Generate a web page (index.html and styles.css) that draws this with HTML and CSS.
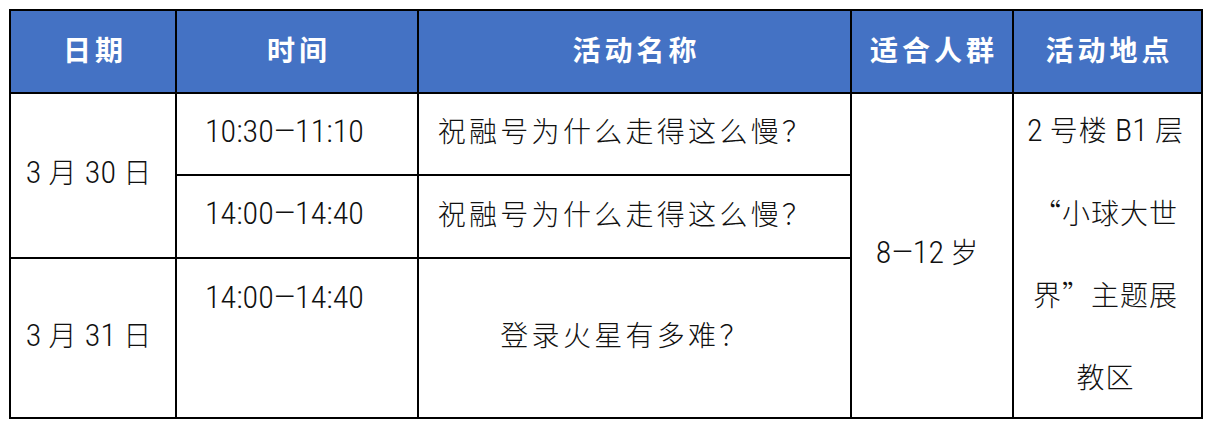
FILE: index.html
```html
<!DOCTYPE html>
<html lang="zh-CN">
<head>
<meta charset="utf-8">
<title>活动安排</title>
<link rel="stylesheet" href="styles.css">
</head>
<body>
<div class="page">
  <table class="schedule">
    <colgroup>
      <col class="c-date">
      <col class="c-time">
      <col class="c-name">
      <col class="c-age">
      <col class="c-place">
    </colgroup>
    <thead>
      <tr class="r-head">
        <th>日期</th>
        <th>时间</th>
        <th>活动名称</th>
        <th>适合人群</th>
        <th>活动地点</th>
      </tr>
    </thead>
    <tbody>
      <tr class="r-1">
        <td class="date" rowspan="2"><span class="n">3</span> 月 <span class="n">30</span> 日</td>
        <td class="time"><span class="n">10:30—11:10</span></td>
        <td class="name">祝融号为什么走得这么慢？</td>
        <td class="age" rowspan="3"><span class="n">8—12</span> 岁</td>
        <td class="place" rowspan="3"><div class="place-text"><span class="n">2</span> 号楼 <span class="n">B1</span> 层<br>“小球大世<br>界”主题展<br>教区</div></td>
      </tr>
      <tr class="r-2">
        <td class="time"><span class="n">14:00—14:40</span></td>
        <td class="name">祝融号为什么走得这么慢？</td>
      </tr>
      <tr class="r-3">
        <td class="date"><span class="n">3</span> 月 <span class="n">31</span> 日</td>
        <td class="time top"><span class="n">14:00—14:40</span></td>
        <td class="name">登录火星有多难？</td>
      </tr>
    </tbody>
  </table>
</div>
</body>
</html>
```

FILE: styles.css
```css
html, body {
  margin: 0;
  padding: 0;
  background: #ffffff;
}

.page {
  padding: 9px 0 0 9px;
}

.schedule {
  border-collapse: separate;
  border-spacing: 0;
  table-layout: fixed;
  width: 1194px;
  border-top: 2px solid #000;
  border-left: 2px solid #000;
  font-family: "Noto Sans CJK SC", sans-serif;
  color: #111;
}

.c-date { width: 166px; }
.c-time { width: 242px; }
.c-name { width: 433px; }
.c-age { width: 162px; }
.c-place { width: 189px; }

.schedule th,
.schedule td {
  box-sizing: border-box;
  border-right: 2px solid #000;
  border-bottom: 2px solid #000;
  padding: 0 0 8px 0;
  vertical-align: middle;
  text-align: center;
  font-size: 28px;
  font-weight: 300;
  line-height: 40px;
}

.r-head { height: 83px; }
.r-1 { height: 82px; }
.r-2 { height: 83px; }
.r-3 { height: 160px; }

.schedule th {
  background: #4472c4;
  color: #ffffff;
  font-weight: 700;
  letter-spacing: 4px;
  padding: 0 0 5px 4px;
}

.n {
  font-family: "Roboto Condensed", "Roboto", sans-serif;
  font-weight: 300;
  font-size: 32px;
  letter-spacing: 0;
}

.schedule td.date {
  padding-right: 8px;
  letter-spacing: 1px;
}

.schedule td.time {
  text-align: left;
  padding-left: 28px;
  line-height: 70px;
}

.schedule td.time.top {
  vertical-align: top;
  padding-top: 2px;
}

.schedule td.name {
  letter-spacing: 3.3px;
  padding-right: 18px;
}

.schedule td.age {
  padding-right: 10px;
}

.schedule td.place {
  padding: 0 4px 0 0;
  letter-spacing: 1px;
}

.place-text {
  line-height: 82px;
  margin: -8px 0 -2px;
}
```
